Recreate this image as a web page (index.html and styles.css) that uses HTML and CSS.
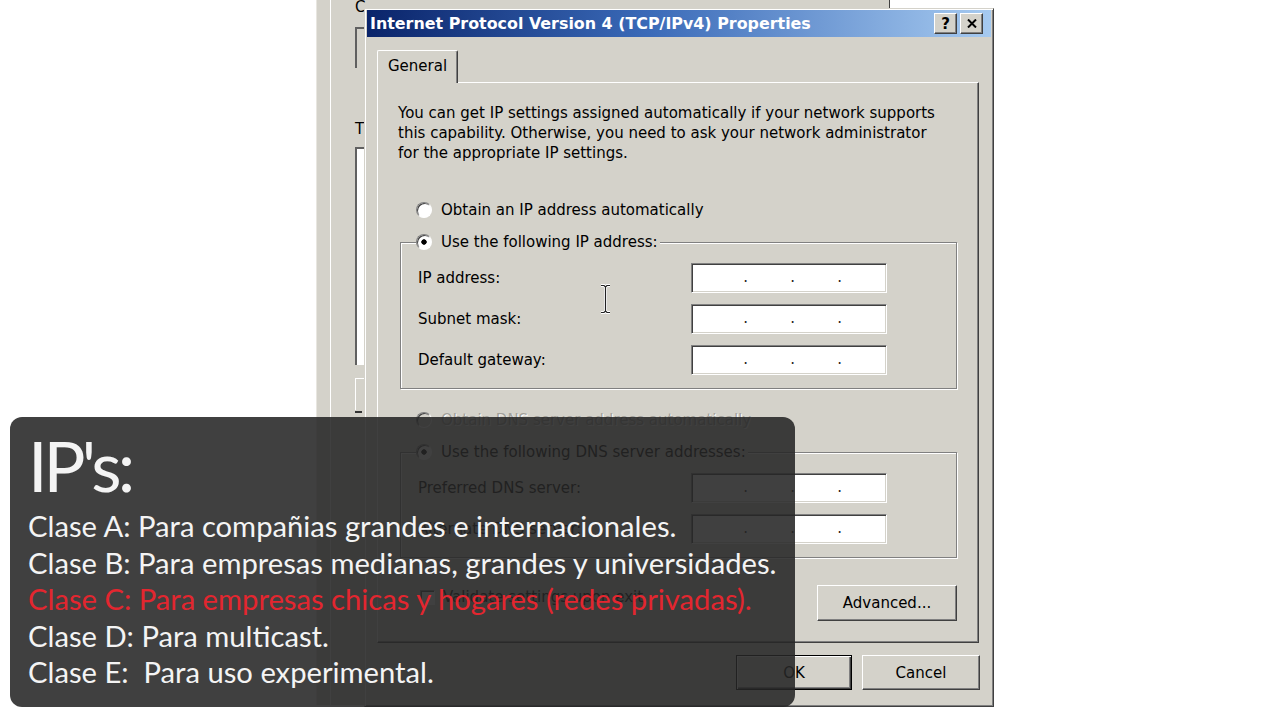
FILE: index.html
```html
<!DOCTYPE html>
<html>
<head>
    <meta charset="UTF-8">
    <meta name="viewport" content="width=device-width, initial-scale=1.0">
    <title>Internet Protocol Version 4 (TCP/IPv4) Properties</title>
    <link rel="stylesheet" href="styles.css">
</head>
<body>
    <!-- ventana de fondo (propiedades de la conexion) -->
    <div class="parent">
        <div class="parent-frame">
            <div class="p-label">C</div>
            <div class="p-combo"></div>
            <div class="p-label p-t">T</div>
            <div class="p-list"></div>
            <div class="p-small"></div>
            <div class="p-dash"></div>
        </div>
    </div>

    <div class="dialog">
        <div class="titlebar">
            <span class="title">Internet Protocol Version 4 (TCP/IPv4) Properties</span>
            <div class="caption-buttons">
                <span class="cbtn">?</span>
                <span class="cbtn">
                    <svg width="10" height="9" viewBox="0 0 10 9"><path d="M1 0.5l8 8M9 0.5l-8 8" stroke="#000" stroke-width="2" fill="none"/></svg>
                </span>
            </div>
        </div>

        <div class="dlg-body">
            <div class="tabs">
                <div class="tab">General</div>
            </div>
            <div class="panel">
                <p class="intro">You can get IP settings assigned automatically if your network supports<br>this capability. Otherwise, you need to ask your network administrator<br>for the appropriate IP settings.</p>

                <div class="option opt-auto"><span class="radio"></span>Obtain an IP address automatically</div>

                <fieldset class="group">
                    <legend><span class="radio checked"></span>Use the following IP address:</legend>
                    <div class="field first"><span>IP address:</span><span class="ipbox"><span>.</span><span>.</span><span>.</span></span></div>
                    <div class="field"><span>Subnet mask:</span><span class="ipbox"><span>.</span><span>.</span><span>.</span></span></div>
                    <div class="field"><span>Default gateway:</span><span class="ipbox"><span>.</span><span>.</span><span>.</span></span></div>
                </fieldset>

                <div class="option opt-dns disabled"><span class="radio"></span>Obtain DNS server address automatically</div>

                <fieldset class="group">
                    <legend><span class="radio checked"></span>Use the following DNS server addresses:</legend>
                    <div class="field first"><span>Preferred DNS server:</span><span class="ipbox"><span>.</span><span>.</span><span>.</span></span></div>
                    <div class="field"><span>Alternate DNS server:</span><span class="ipbox"><span>.</span><span>.</span><span>.</span></span></div>
                </fieldset>

                <div class="panel-foot">
                    <div class="check"><span class="checkbox"></span>Validate settings upon exit</div>
                    <span class="button btn-adv">Advanced...</span>
                </div>
            </div>

            <div class="dlg-buttons">
                <span class="button btn-ok">OK</span>
                <span class="button btn-cancel">Cancel</span>
            </div>
        </div>
    </div>

    <!-- cursor de texto -->
    <div class="ibeam">
        <svg width="13" height="30" viewBox="0 0 13 30">
            <path d="M2 1.5h3l1.5 1.5 1.5-1.5h3M6.5 3v24M2 28.5h3l1.5-1.5 1.5 1.5h3" fill="none" stroke="#fff" stroke-width="3"/>
            <path d="M2 1.5h3l1.5 1.5 1.5-1.5h3M6.5 3v24M2 28.5h3l1.5-1.5 1.5 1.5h3" fill="none" stroke="#222" stroke-width="1.2"/>
        </svg>
    </div>

    <!-- cartel con las clases de IP -->
    <div class="overlay">
        <h1>IP's:</h1>
        <ul>
            <li>Clase A: Para compañias grandes e internacionales.</li>
            <li>Clase B: Para empresas medianas, grandes y universidades.</li>
            <li class="red">Clase C: Para empresas chicas y hogares (redes privadas).</li>
            <li>Clase D: Para multicast.</li>
            <li>Clase E:&nbsp; Para uso experimental.</li>
        </ul>
    </div>
</body>
</html>
```

FILE: styles.css
```css
body {
    margin: 0;
    width: 1280px;
    height: 720px;
    position: relative;
    overflow: hidden;
    background-color: #ffffff;
    font-family: "DejaVu Sans", sans-serif;
    font-size: 15px;
    color: #000000;
}

/* ventana de fondo */
.parent {
    position: absolute;
    left: 316px;
    top: -20px;
    width: 574px;
    height: 725px;
    box-sizing: border-box;
    background-color: #d4d2ca;
    border-left: 1px solid #e8e6e0;
    border-right: 1px solid #404040;
}

.parent-frame {
    height: 100%;
    margin-left: 13px;
    padding: 19px 0 0 24px;
    box-sizing: border-box;
    border-left: 1px solid #ffffff;
}

.p-label {
    line-height: 16px;
}

.p-t {
    margin-top: 53px;
}

.p-combo {
    width: 120px;
    height: 41px;
    margin-top: 12px;
    box-sizing: border-box;
    border-left: 2px solid #606060;
    border-top: 2px solid #606060;
}

.p-list {
    width: 120px;
    height: 218px;
    margin-top: 10px;
    box-sizing: border-box;
    background-color: #ffffff;
    border-left: 2px solid #606060;
    border-top: 2px solid #606060;
}

.p-small {
    width: 120px;
    height: 32px;
    margin-top: 13px;
    box-sizing: border-box;
    border-left: 1px solid #ffffff;
    border-top: 1px solid #ffffff;
}

.p-dash {
    width: 7px;
    height: 2px;
    margin-top: 1px;
    background-color: #333333;
}

/* dialogo principal */
.dialog {
    position: absolute;
    left: 364px;
    top: 8px;
    width: 630px;
    height: 699px;
    box-sizing: border-box;
    display: flex;
    flex-direction: column;
    padding: 1px 2px 2px 2px;
    background-color: #d4d2ca;
    border: 1px solid;
    border-color: #d4d2ca #404040 #404040 #d4d2ca;
    box-shadow: inset 1px 1px #ffffff, inset -1px -1px #808080;
}

.titlebar {
    height: 27px;
    display: flex;
    align-items: center;
    justify-content: space-between;
    padding: 0 8px 0 3px;
    background: linear-gradient(to right, #0a246a 0%, #3a6ab8 45%, #a6caf0 100%);
}

.title {
    color: #ffffff;
    font-weight: bold;
    font-size: 15.9px;
    white-space: nowrap;
}

.caption-buttons {
    display: flex;
    gap: 3px;
}

.cbtn {
    width: 23px;
    height: 21px;
    box-sizing: border-box;
    display: flex;
    align-items: center;
    justify-content: center;
    background-color: #d4d2ca;
    border: 1px solid;
    border-color: #ffffff #404040 #404040 #ffffff;
    box-shadow: inset -1px -1px #808080;
    font-weight: bold;
    font-size: 15px;
}

.dlg-body {
    flex: 1;
    display: flex;
    flex-direction: column;
    padding: 13px 12px 0 10px;
}

.tabs {
    display: flex;
}

.tab {
    position: relative;
    z-index: 1;
    width: 81px;
    height: 33px;
    margin-bottom: -1px;
    box-sizing: border-box;
    padding-left: 10px;
    line-height: 31px;
    background-color: #d4d2ca;
    border: 1px solid;
    border-color: #ffffff #404040 transparent #ffffff;
    border-bottom: none;
    border-radius: 2px 2px 0 0;
    box-shadow: inset -1px 0 #808080;
}

.panel {
    height: 561px;
    box-sizing: border-box;
    padding: 0 21px 0 20px;
    border: 1px solid;
    border-color: #ffffff #404040 #404040 #ffffff;
    box-shadow: inset -1px -1px #808080;
}

.intro {
    margin: 20px 0 0 0;
    line-height: 20px;
    white-space: nowrap;
}

.option {
    display: flex;
    align-items: center;
    height: 20px;
    margin-left: 18px;
}

.opt-auto {
    margin-top: 37px;
}

.opt-dns {
    margin-top: 21px;
}

.disabled {
    color: #a3a19a;
    text-shadow: 1px 1px #ffffff;
}

.radio {
    width: 16px;
    height: 16px;
    margin-right: 9px;
    flex-shrink: 0;
    box-sizing: border-box;
    border-radius: 50%;
    background-color: #ffffff;
    border: 1px solid;
    border-color: #808080 #ffffff #ffffff #808080;
    box-shadow: inset 1px 1px #404040;
}

.radio.checked {
    background: radial-gradient(circle, #000000 2.4px, #ffffff 3px);
}

.disabled .radio {
    background-color: #d4d2ca;
}

.group {
    margin: 12px 0 0 2px;
    padding: 0 69px 13px 15px;
    border: 1px solid #808080;
    box-shadow: inset 1px 1px #ffffff, 1px 1px #ffffff;
}

.group legend {
    display: flex;
    align-items: center;
    height: 20px;
    padding: 0 2px 0 0;
    background-color: #d4d2ca;
}

.field {
    display: flex;
    align-items: center;
    justify-content: space-between;
    height: 30px;
    margin-top: 11px;
    padding-left: 2px;
}

.ipbox {
    width: 196px;
    height: 30px;
    box-sizing: border-box;
    display: flex;
    padding-left: 9px;
    line-height: 27px;
    background-color: #ffffff;
    border: 1px solid;
    border-color: #808080 #ffffff #ffffff #808080;
    box-shadow: inset 1px 1px #404040, inset -1px -1px #d4d2ca;
}

.ipbox span {
    width: 47px;
    text-align: right;
    color: #222222;
}

.panel-foot {
    display: flex;
    align-items: flex-start;
    justify-content: space-between;
    margin: 27px 0 0 2px;
}

.check {
    display: flex;
    align-items: center;
    height: 20px;
    margin: 2px 0 0 20px;
}

.checkbox {
    width: 15px;
    height: 15px;
    margin-right: 8px;
    box-sizing: border-box;
    background-color: #ffffff;
    border: 1px solid;
    border-color: #808080 #ffffff #ffffff #808080;
    box-shadow: inset 1px 1px #404040;
}

.button {
    display: flex;
    align-items: center;
    justify-content: center;
    box-sizing: border-box;
    border: 1px solid;
    border-color: #ffffff #404040 #404040 #ffffff;
    box-shadow: inset -1px -1px #808080;
}

.btn-adv {
    width: 140px;
    height: 36px;
}

.dlg-buttons {
    display: flex;
    justify-content: flex-end;
    gap: 10px;
    margin: 12px -1px 0 0;
}

.btn-ok {
    width: 116px;
    height: 35px;
    border-color: #000000;
    box-shadow: inset 1px 1px #ffffff, inset -1px -1px #404040, inset -2px -2px #808080;
}

.btn-cancel {
    width: 118px;
    height: 35px;
}

.ibeam {
    position: absolute;
    left: 599px;
    top: 284px;
    line-height: 0;
}

/* cartel */
.overlay {
    position: absolute;
    left: 10px;
    top: 417px;
    width: 785px;
    height: 290px;
    box-sizing: border-box;
    padding: 11px 0 0 18px;
    border-radius: 12px;
    background-color: rgba(38, 38, 38, 0.88);
    color: #f4f4f4;
    font-family: Lato, "Liberation Sans", sans-serif;
}

.overlay h1 {
    margin: 0 0 6px 0;
    font-size: 70px;
    font-weight: normal;
    line-height: 74px;
    letter-spacing: -4px;
}

.overlay ul {
    list-style: none;
    margin: 0;
    padding: 0;
    font-size: 29.2px;
    line-height: 36.5px;
    white-space: nowrap;
}

.overlay .red {
    color: #e3262f;
}
```
